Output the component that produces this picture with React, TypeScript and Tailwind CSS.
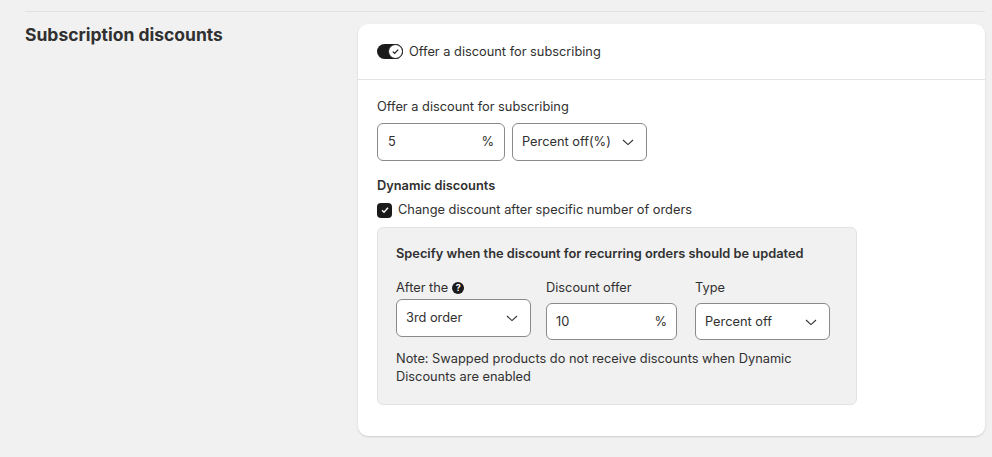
import React from "react";

const Chev = () => (
  <svg width="16" height="16" viewBox="0 0 16 16" fill="none" stroke="#303030" strokeWidth="1.1"><path d="M3 6l5 4.6L13 6" /></svg>
);

export default function App() {
  return (
    <div className="min-h-[457px] bg-[#f1f1f1] text-[#303030] text-[12.8px]" style={{ fontFamily: "Inter, sans-serif" }}>
      <div className="pl-[25px] pr-[7px] pt-[11px]">
        <div className="border-t border-[#e3e3e3]" />
        <div className="flex pt-[12px]">
          <div className="w-[333px] text-[17.5px] font-bold leading-[22px]">Subscription discounts</div>
          <div className="flex-1 bg-white rounded-[10px] shadow-[0_1px_2px_rgba(0,0,0,0.15)] mb-[18px]">
            <div className="h-[56px] flex items-center gap-[6px] px-[19px] border-b border-[#e3e3e3]">
              <div className="w-[26px] h-[15px] rounded-full bg-[#1a1a1a] relative">
                <div className="absolute right-[0px] top-[0px] w-[15px] h-[15px] rounded-full bg-white border border-[#1a1a1a] flex items-center justify-center">
                  <svg width="9" height="9" viewBox="0 0 10 10" fill="none" stroke="#1a1a1a" strokeWidth="1.3"><path d="M2 5.2l2 2 4-4.4" /></svg>
                </div>
              </div>
              <span>Offer a discount for subscribing</span>
            </div>
            <div className="px-[19px] pt-[18px] pb-[31px]">
              <div className="leading-[18px]">Offer a discount for subscribing</div>
              <div className="flex gap-[7px] mt-[7px]">
                <div className="w-[128px] h-[38px] border border-[#8a8a8a] rounded-[6px] flex items-center justify-between px-[10px]"><span>5</span><span>%</span></div>
                <div className="w-[135px] h-[38px] border border-[#8a8a8a] rounded-[6px] flex items-center justify-between pl-[9px] pr-[10px]"><span>Percent off(%)</span><Chev /></div>
              </div>
              <div className="font-semibold mt-[16px] leading-[18px]">Dynamic discounts</div>
              <div className="flex items-center gap-[6px] mt-[6px] leading-[18px]">
                <div className="w-[15px] h-[15px] rounded-[4px] bg-[#1a1a1a] flex items-center justify-center">
                  <svg width="10" height="10" viewBox="0 0 10 10" fill="none" stroke="#fff" strokeWidth="1.4"><path d="M2 5.2l2 2 4-4.4" /></svg>
                </div>
                <span>Change discount after specific number of orders</span>
              </div>
              <div className="w-[480px] mt-[8px] bg-[#f1f1f1] rounded-[6px] border border-[#e3e3e3] px-[18px] pt-[17px] pb-[18px]">
                <div className="font-semibold leading-[18px]">Specify when the discount for recurring orders should be updated</div>
                <div className="flex gap-[15px] mt-[16px]">
                  <div className="w-[135px]">
                    <div className="flex items-center gap-[4px] leading-[18px]">After the
                      <span className="w-[12px] h-[12px] rounded-full bg-[#1a1a1a] text-white text-[9px] font-bold flex items-center justify-center">?</span>
                    </div>
                    <div className="mt-[2px] h-[38px] bg-white border border-[#8a8a8a] rounded-[6px] flex items-center justify-between pl-[9px] pr-[10px]"><span>3rd order</span><Chev /></div>
                  </div>
                  <div className="w-[131px]">
                    <div className="leading-[18px]">Discount offer</div>
                    <div className="mt-[6px] h-[37px] bg-white border border-[#8a8a8a] rounded-[6px] flex items-center justify-between px-[9px]"><span>10</span><span>%</span></div>
                  </div>
                  <div className="w-[135px] ml-[3px]">
                    <div className="leading-[18px]">Type</div>
                    <div className="mt-[6px] h-[37px] bg-white border border-[#8a8a8a] rounded-[6px] flex items-center justify-between pl-[9px] pr-[10px]"><span>Percent off</span><Chev /></div>
                  </div>
                </div>
                <div className="mt-[10px] leading-[18px] w-[420px]">Note: Swapped products do not receive discounts when Dynamic Discounts are enabled</div>
              </div>
            </div>
          </div>
        </div>
      </div>
    </div>
  );
}
